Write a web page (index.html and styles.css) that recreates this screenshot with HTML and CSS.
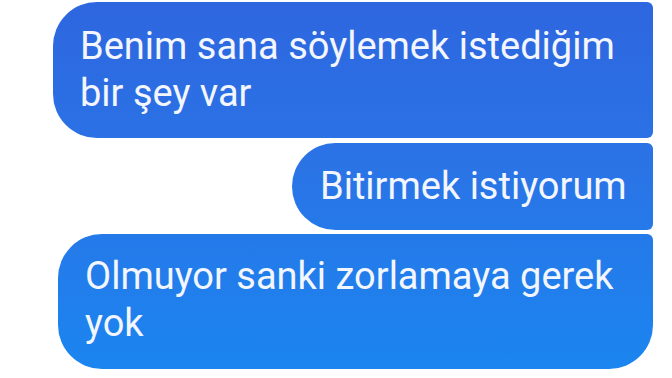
FILE: index.html
```html
<!DOCTYPE html>
<html>
    <head>
        <title>Mesajlar</title>
        <link rel="stylesheet" href="styles.css">
    </head>
    <body>
        <div class="thread">
            <div class="bubble first">Benim sana söylemek istediğim bir şey var</div>
            <div class="bubble middle">Bitirmek istiyorum</div>
            <div class="bubble last">Olmuyor sanki zorlamaya gerek yok</div>
        </div>
    </body>
</html>
```

FILE: styles.css
```css
body {
    margin: 0;
    background: #fff;
    font-family: Roboto, "Noto Sans", sans-serif;
}
    .thread {
        display: flex;
        flex-direction: column;
        align-items: flex-end;
        gap: 5px;
        padding: 2px 19px 0 0;
    }
    .bubble {
        box-sizing: border-box;
        color: #f3f6ff;
        font-size: 38px;
        line-height: 47px;
        padding: 20px 27px;
        background: linear-gradient(to bottom, #2e66df 0%, #2a74e6 45%, #1a86f0 100%);
        background-attachment: fixed;
    }
    .first {
        width: 600px;
        padding-top: 21px;
        padding-bottom: 21px;
        border-radius: 44px 6px 6px 44px;
    }
    .middle {
        width: 361px;
        padding-left: 28px;
        white-space: nowrap;
        border-radius: 44px 6px 6px 44px;
    }
    .last {
        width: 595px;
        margin-top: -1px;
        padding-top: 19px;
        padding-bottom: 22px;
        border-radius: 44px 6px 44px 44px;
    }
```
